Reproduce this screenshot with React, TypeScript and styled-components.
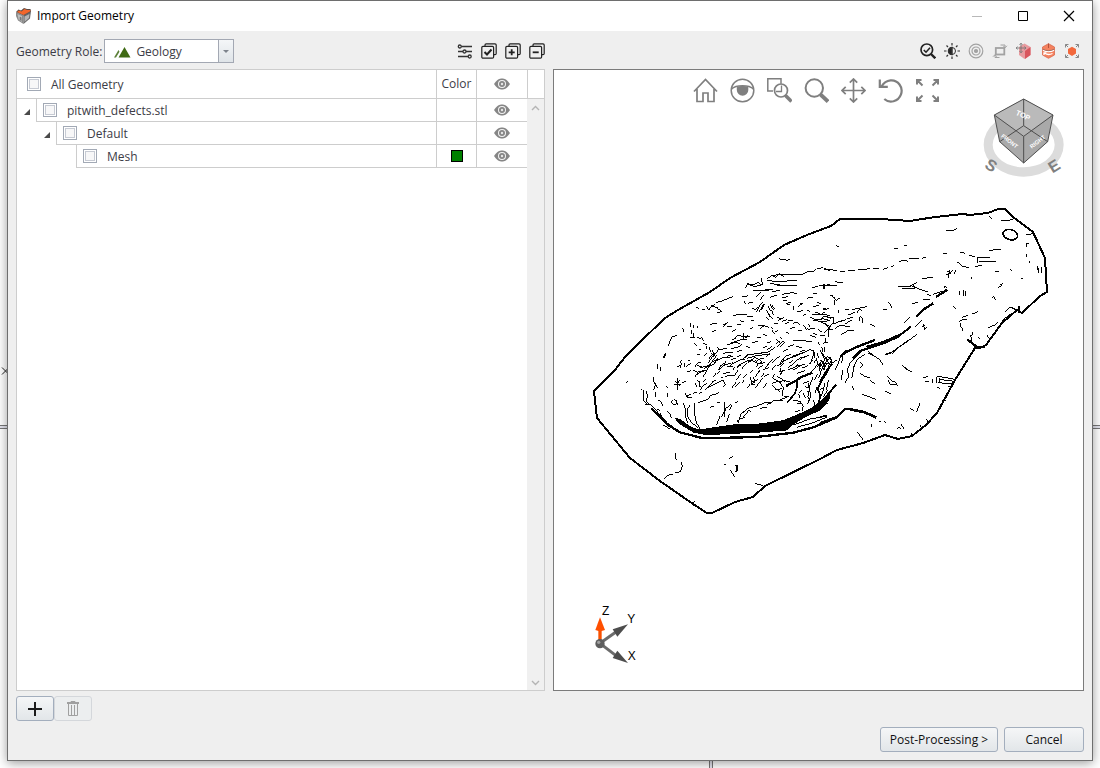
import React from "react";
import styled, { createGlobalStyle, css } from "styled-components";

const GlobalStyle = createGlobalStyle`
  *, *::before, *::after { box-sizing: border-box; }
  body {
    margin: 0;
    background: #fff;
    color: #3c3c46;
    font-family: "Open Sans", "Noto Sans", sans-serif;
    font-size: 12px;
    line-height: 16px;
  }
  button, select, input { font: inherit; color: inherit; margin: 0; }
`;

const Page = styled.div`
  position: relative;
  display: flex;
  min-height: 100vh;
  padding: 0 7px 7px;
  overflow: hidden;
  background:
    linear-gradient(#777 1px, #e4e4ee 1px 3px, #777 3px) 0 425px / 100% 4px no-repeat,
    linear-gradient(90deg, #777 1px, #e4e4ee 1px 3px, #777 3px) 709px 0 / 4px 100% no-repeat,
    #fff;
`;

const BackdropMark = styled.svg`
  position: absolute;
  left: 1px;
  top: 366px;
`;

const Dialog = styled.section`
  position: relative;
  flex: 1;
  min-width: 0;
  display: flex;
  flex-direction: column;
  border: 1px solid #6e6e6e;
  background: #efefef;
  box-shadow: 0 2px 10px rgba(0, 0, 0, 0.4);
`;

const TitleBar = styled.header`
  display: flex;
  align-items: center;
  height: 30px;
  padding-left: 8px;
  background: #fff;
  color: #000;
`;

const Title = styled.h1`
  flex: 1;
  margin: 0 0 0 6px;
  font-size: 12px;
  font-weight: 400;
`;

const CaptionButton = styled.button`
  display: grid;
  place-items: center;
  width: 46px;
  height: 28px;
  padding: 0;
  border: 0;
  background: none;
`;

const Content = styled.main`
  flex: 1;
  display: grid;
  grid-template-columns: minmax(0, 529fr) minmax(0, 531fr);
  grid-template-rows: 38px 1fr;
  column-gap: 8px;
  padding: 0 8px;
`;

const Toolbar = styled.div<{ $inset?: boolean }>`
  display: flex;
  align-items: center;
  gap: 8px;
  padding-top: 2px;
  padding-right: ${(p) => (p.$inset ? 4 : 0)}px;
  justify-content: ${(p) => (p.$inset ? "flex-end" : "flex-start")};
`;

const RoleLabel = styled.label`
  flex: 1;
  display: flex;
  align-items: center;
  gap: 2px;
  white-space: nowrap;
`;

const Caption = styled.span`
  padding-top: 2px;
`;

const Combo = styled.span`
  position: relative;
  width: 130px;
  height: 24px;
`;

const RoleSelect = styled.select`
  appearance: none;
  width: 100%;
  height: 100%;
  padding: 2px 18px 0 31px;
  border: 1px solid #a3a8b3;
  border-radius: 0;
  background: linear-gradient(#f4f6f8, #dfe4e8) right / 15px 100% no-repeat, #fff;
`;

const ComboIcon = styled.svg`
  position: absolute;
  left: 10px;
  top: 7px;
  pointer-events: none;
`;

const ComboArrow = styled.svg`
  position: absolute;
  right: 0;
  top: 0;
  pointer-events: none;
`;

const IconButton = styled.button`
  display: block;
  width: 16px;
  height: 16px;
  padding: 0;
  border: 0;
  background: none;
  svg { display: block; }
`;

const TreePanel = styled.div`
  display: flex;
  border: 1px solid #cdcdcd;
  background: #fff;
`;

const TreeArea = styled.div`
  flex: 1;
  min-width: 0;
`;

const Tree = styled.table`
  width: 100%;
  table-layout: fixed;
  border-collapse: separate;
  border-spacing: 0;
`;

const line = css`1px solid #cdcdcd`;

const Cell = styled.td<{ $head?: boolean }>`
  height: ${(p) => (p.$head ? 29 : 23)}px;
  padding: 0;
  border-bottom: ${line};
  border-left: ${line};
  font-weight: 400;
  text-align: center;
  svg { display: block; margin: 0 auto; }
`;

const NameCell = styled.td<{ $head?: boolean }>`
  height: ${(p) => (p.$head ? 29 : 23)}px;
  padding: 0;
  font-weight: 400;
  text-align: left;
`;

const NameRow = styled.div`
  display: flex;
  height: 100%;
`;

const Twisty = styled.button<{ $depth: number }>`
  flex: none;
  display: grid;
  place-items: center end;
  width: ${(p) => p.$depth * 20 - 1}px;
  padding: 2px 6px 0 0;
  border: 0;
  background: none;
`;

const CheckLabel = styled.label<{ $head?: boolean }>`
  flex: 1;
  display: flex;
  align-items: center;
  gap: 10px;
  height: ${(p) => (p.$head ? 29 : 23)}px;
  padding-left: ${(p) => (p.$head ? 10 : 6)}px;
  border-bottom: ${line};
  border-left: ${(p) => (p.$head ? "0" : "1px solid #cdcdcd")};
`;

const Check = styled.input`
  appearance: none;
  width: 14px;
  height: 14px;
  border: 1px solid #a2a9b5;
  background: #f7f7f8;
  box-shadow: inset 0 0 0 1px #fff, inset 0 0 0 2px #c6cad3;
`;

const Swatch = styled.button`
  display: block;
  width: 12px;
  height: 12px;
  margin: 0 auto;
  padding: 0;
  border: 1px solid #000;
  background: #008000;
`;

const EyeButton = styled.button`
  display: block;
  width: 16px;
  margin: 0 auto;
  padding: 0;
  border: 0;
  background: none;
`;

const Scrollbar = styled.div`
  flex: none;
  display: flex;
  flex-direction: column;
  justify-content: space-between;
  align-items: center;
  width: 17px;
  padding-bottom: 4px;
  background: #f0f0f0;
`;

const ScrollHead = styled.div`
  align-self: stretch;
  height: 29px;
  margin-bottom: 6px;
  border-left: ${line};
  border-bottom: ${line};
  background: #fff;
`;

const ScrollUp = styled.div`
  flex: 1;
  display: flex;
  flex-direction: column;
  align-self: stretch;
  align-items: center;
`;

const Viewport = styled.div`
  position: relative;
  border: 1px solid #7b7b7b;
  background: #fff;
`;

const Scene = styled.svg`
  position: absolute;
  inset: 0;
  width: 100%;
  height: 100%;
`;

const ViewTools = styled.div`
  position: relative;
  display: flex;
  justify-content: center;
  padding: 7px 5px 0 0;
`;

const ViewButton = styled.button`
  display: grid;
  place-items: center;
  width: 37px;
  height: 27px;
  padding: 0;
  border: 0;
  background: none;
`;

const ViewCube = styled.svg`
  position: absolute;
  top: 27px;
  right: 18px;
`;

const Axes = styled.svg`
  position: absolute;
  left: 26px;
  bottom: 10px;
`;

const Actions = styled.div`
  display: flex;
  padding: 5px 8px 0;
`;

const Footer = styled.footer`
  display: flex;
  justify-content: flex-end;
  gap: 6px;
  padding: 6px 8px 8px;
`;

const PushButton = styled.button<{ $width: number }>`
  display: grid;
  place-items: center;
  width: ${(p) => p.$width}px;
  height: 25px;
  padding: 0;
  border: 1px solid #a3aebd;
  border-radius: 3px;
  background: linear-gradient(#f5f6f7, #e2e6e9);
  color: #111;
  white-space: nowrap;
  &:disabled { border-color: #d4d7db; background: #eceeef; color: #9a9a9a; }
`;

const Eye = () => (
  <svg width="16" height="12" viewBox="0 0 16 12">
    <path d="M0 6C3 1.600 5.500.5 8 .5S13 1.600 16 6c-3 4.400-5.500 5.500-8 5.500S3 10.400 0 6z" fill="#868686" />
    <circle cx="8" cy="6" r="4" fill="#f4f4f4" />
    <circle cx="8" cy="6" r="3" fill="#868686" />
    <circle cx="8" cy="6" r="1.200" fill="#e6e6e6" />
  </svg>
);

const AppIcon = () => (
  <svg width="15" height="16" viewBox="0 0 15 16">
    <path d="M0 4L7.500 7.500V16L2 12.500 0 8z" fill="#8b8b8b" />
    <path d="M15 3l-1 7.500L7.500 16V7z" fill="#666" />
    <path d="M1.500 6l4.500 2v6L2.500 11.500z" fill="#bdbdbd" />
    <path d="M3.800 9.500q1-1.500 1.700.5v3l-1.700-1z" fill="#777" />
    <path d="M8.500 8.500L13.500 6l-.5 4-4.500 4z" fill="#b4b4b4" />
    <path d="M0 4L2.500 1.500 5 2.500 8 0l3 1 3.500 0L15 3.500 7.500 7.500z" fill="#5a4a44" />
    <path d="M1 4l2-1.500L5.500 3.500 8.500 1 11 2h3.300v1.300L7.500 7z" fill="#f2662a" />
  </svg>
);

const Sliders = () => (
  <svg width="16" height="16" viewBox="0 0 16 16" fill="none" stroke="#333" strokeWidth="1.300">
    <path d="M4.500 3.500H15M1 8.500h5M9 8.500h6M1 13.500h10" />
    <circle cx="2.800" cy="3.500" r="1.500" />
    <circle cx="7.500" cy="8.500" r="1.500" />
    <circle cx="12.700" cy="13.500" r="1.500" />
  </svg>
);

const Stacked = ({ mark, heavy }: { mark: string; heavy?: boolean }) => (
  <svg width="16" height="16" viewBox="0 0 16 16" fill="none" stroke="#222" strokeWidth="1.200">
    <path d="M4 3V2Q4 .8 5.200.8H14Q15.200.8 15.200 2v8.500q0 1.200-1.200 1.200h-1" />
    <rect x=".8" y="3.400" width="11.800" height="11.800" rx="1.200" />
    <path d={mark} strokeWidth={heavy ? 2 : 1.800} />
  </svg>
);

const RightIcons: { name: string; art: React.ReactNode }[] = [
  {
    name: "Check geometry",
    art: (
      <g fill="none" stroke="#222">
        <circle cx="6.800" cy="6.800" r="5.800" strokeWidth="1.700" />
        <path d="M11 11l4.300 4.300" strokeWidth="2.400" />
        <path d="M3.800 7l2.200 2.200 4-4.400" strokeWidth="1.600" />
      </g>
    ),
  },
  {
    name: "Lighting",
    art: (
      <g stroke="#333" fill="none">
        <circle cx="8" cy="8" r="3.500" />
        <path d="M8 4.500a3.500 3.500 0 000 7z" fill="#222" strokeWidth="1.500" />
        <path d="M8 0v2.500M8 13.500V16M0 8h2.500M13.500 8H16M2.500 2.500l1.500 1.500M12 12l1.500 1.500M13.500 2.500L12 4M4 12l-1.500 1.500" strokeWidth="1.200" />
      </g>
    ),
  },
  {
    name: "Target",
    art: (
      <g stroke="#a2a2a2" fill="none" strokeWidth="1.200">
        <circle cx="8" cy="8" r="6.800" />
        <circle cx="8" cy="8" r="4" />
        <circle cx="8" cy="8" r="1.500" fill="#a2a2a2" />
      </g>
    ),
  },
  {
    name: "Rotate plane",
    art: (
      <g stroke="#a2a2a2" fill="none">
        <rect x="3.800" y="5" width="8.500" height="6.500" strokeWidth="1.800" />
        <path d="M8.500 2h4.500v2.500M11.300 2.800l1.700 2 2-2M7.500 14.500H3V12M1 13.700l2-2 1.700 2" strokeWidth="1" />
      </g>
    ),
  },
  {
    name: "Move body",
    art: (
      <g>
        <path d="M3 4l5.500-3.500L14.500 4v8l-6 4L3 12z" fill="#e79a9e" />
        <path d="M9 8l5.500-4v8L9 16z" fill="#d9555d" />
        <path d="M5 0v10M0 5h10M3.500 1.800L5 .3l1.500 1.500M3.500 8.200L5 9.700l1.500-1.500M1.600 3.500L.2 5 1.600 6.500M8.500 3.500L9.900 5 8.500 6.500" fill="none" stroke="#777" strokeWidth=".9" />
      </g>
    ),
  },
  {
    name: "Rotate body",
    art: (
      <g>
        <path d="M2.500 4l6-3.300L14.500 4v8l-6 3.300-6-3.300z" fill="#f5825f" stroke="#d9694c" strokeWidth=".8" />
        <path d="M8.500.5v4.500" stroke="#b5523c" />
        <path d="M3 7.200c3 2 8 2 11 0M12.500 10.500c-3 1.500-6 1-8-.5M4 12V9.800h2.400" fill="none" stroke="#fff" strokeWidth="1.300" />
        <path d="M3 6.200c3 2 8 2 11 0" fill="none" stroke="#8c6a60" strokeWidth=".8" />
      </g>
    ),
  },
  {
    name: "Fit body",
    art: (
      <g>
        <path d="M4 6l4-2.300L12 6v4.600l-4 2.300-4-2.300z" fill="#f2683c" />
        <path d="M1.500 4.500v-3h3M1.500 1.500L4 4M11.500 1.500h3v3M14.500 1.500L12 4M1.500 11.500v3h3M1.500 14.500L4 12M14.500 11.500v3h-3M14.500 14.500L12 12" fill="none" stroke="#888" />
      </g>
    ),
  },
];

const ViewIcons: { name: string; art: React.ReactNode }[] = [
  { name: "Home view", art: <path d="M1 13.500L12.500 1.500 24 13.500M4 11v12.500h6V15h5v8.500h6V11" strokeWidth="1.700" /> },
  {
    name: "Visibility",
    art: (
      <>
        <circle cx="12.500" cy="12.500" r="11.300" strokeWidth="1.500" />
        <path d="M1.500 11C6 6.800 19 6.800 23.500 11" strokeWidth="1.500" />
        <path d="M6.800 9.300c3-1.600 8.500-1.600 11.500 0v2.700a5.700 5.700 0 01-11.500 0z" fill="#7f7f7f" stroke="none" />
      </>
    ),
  },
  {
    name: "Zoom window",
    art: (
      <>
        <path d="M6 13H.8V.8H14v5" strokeWidth="1.500" />
        <circle cx="14" cy="12.500" r="6.500" strokeWidth="1.700" />
        <path d="M9 13.500h5.500V7.500" strokeWidth="1.300" />
        <path d="M18.500 17.500l6 6" strokeWidth="3.600" />
      </>
    ),
  },
  {
    name: "Zoom",
    art: (
      <>
        <circle cx="10.300" cy="10" r="8.700" strokeWidth="2" />
        <path d="M16.500 16.500l7.500 7" strokeWidth="3.800" />
      </>
    ),
  },
  { name: "Pan", art: <path d="M12.500 1v23M1 12.500h23M8.800 4.700l3.700-3.700 3.700 3.700M8.800 20.300l3.700 3.700 3.700-3.700M4.700 8.800L1 12.500l3.700 3.700M20.300 8.800l3.700 3.700-3.700 3.700" strokeWidth="1.700" /> },
  { name: "Rotate", art: <path d="M3.500 8.500C8 1 17 .5 21.500 6.500S23 21 15.500 23.200C12 24 8.500 23 6.300 21M1.800 1.500v7.300h8" strokeWidth="2.200" /> },
  { name: "Full view", art: <path d="M2 6.500V2h4.500M2 2l5.500 5.500M18.500 2H23v4.500M23 2l-5.500 5.500M2 18.500V23h4.500M2 23l5.500-5.500M23 18.500V23h-4.500M23 23l-5.500-5.500" strokeWidth="2" /> },
];

/* Feature edges of the pit surface, in four tiles drawn at three units per pixel. */
const meshNW =
  "M597 175l8 4l8-2l6 4l10-2M495 265l8-12l18 6l22-2M500 250l20 5l15-8l12 10M545 235l2 20M520 270l28 3l20-3M560 238l15-12l40-3M575 225l12 8l10-12l14 8M600 222l40 2l30-2l15-8l15 2l10-10l20-3M732 205l18 8M560 240l30 6l60-6M570 250l30 5M590 258l60-2M695 262l20-2M718 258l32-4M735 252v15M575 275l25-4M605 283l30-5l15 2M680 295l20-4M700 282l10-3M530 290l12-14M540 300l12-16M555 270l25-3M570 292l20-6M605 293l20-3M610 300l12 2M618 310l15-2M620 312l10 3" +
  "M408 308l20-6l30-12M347 322l10 3M365 327l10 2M380 318l6 12l8-10l20 2M392 318l14-4M410 325l12 6M412 338l14-4M485 290l12 0l6-4M490 302l8 10M505 310l10-3l4 3M515 325l12 3l10-8M530 335l10-20l8-8M538 335l12-22M545 330l8-18M565 318l6 14M570 312l10 18M560 330l10 20M565 340l12 16M460 347l20-5l20 2M500 349l20 0M590 350l12 6M595 362l16-10M605 365l15-6M615 372l12-6M625 360l14 3M640 370l12-4l8 8M655 320l12-10M652 335l16-3M640 318v12M660 310l10 2" +
  "M690 352l20 8l20-4l20 6M695 345l25-2l30 3M705 338l15 2M700 362l30 2l20-2M735 370l12 15M745 385v25M728 330l20-5M333 370v10M340 375v8M352 378l2 5M390 375l10-5l10 0M395 395l12-3M430 375l15-8M428 382l10-10M440 378l15 3M510 385l10-2M535 375l20 3l12 4M540 385l14-8M575 390l10 12M308 385l5 12M280 410l12-6M277 408l-8 18l-5 12M335 390v12M340 400v15M330 412l14 2M350 410l12 6M365 412l5 10M370 430l10 4M378 438l4 10M388 440l3 16M398 450l4 20M392 460l12 6" +
  "M470 405l20 5l15-3M490 398v22M480 420l20-2M495 412l15-2M440 435l25-8l15 3M450 430l30-10M400 470l15-20l15-2M410 440l12 10M420 450l20-6M640 422l30 0l25 3M690 405l18 8M670 375l10 15M680 385l10 5M700 400l12 4M685 372l4 8M590 418l8 10M600 410l8 8M588 432l12-10M592 440l20-18M600 440l14-14M712 425l8 10M725 440l4 16M738 415v12M730 430l14-4" +
  "M485 480l20-15l30-5l30-4l20-14M500 475l30-8l40-5M505 487l12-6l10 6l14-12l10 0M575 490l14-14l12-8M590 500l12-10M600 495l20-18l30-10l40-18l12 4l-4 20l-8 20M625 510l30-14l20-2M350 465l10-3M325 482l5-2M355 487l8 0M255 462l-6 12M305 488l-5 16M315 490l-3 10M325 495l8-6M360 502l20-2l20-16l20-6M372 505l30-12l8-12l20-8l30-3M415 510l20-16l18-4M440 500l20 0M460 490l20-10l15-2M470 505l14-12M705 455v20M712 460l4 14M700 490l10-12M720 450l15 30M725 480l10 22M738 470l8 20M715 495l6 12" +
  "M465 412l10-6M455 418l14-2M498 440l12 2M516 428l18-4M530 412l14 2M550 402l12 6M572 382l8 6M584 398l10-8M428 462l14-6l16 2M440 474l18-6M470 456l16-6M452 446l20-4l14-8M385 478l10-12M372 468l8-8M342 430l8 8M356 446l8 4M560 430l14-6M548 442l12-2M562 448l14-8M610 455l14-8M625 440l16-6M648 440l18 2M660 456l14-6M612 478l-8 14M640 480l-14 10M660 478l14-8M676 470l12-4M540 492l16-6M534 506l14-10M556 505l10-14M700 320l16-4M712 308l12 2M680 330l10 4M668 348l10-6M690 385l16 2M715 388l10 8M720 405l14 2M655 392l10-2M630 385l14-2M618 395l8 6M470 375l14-2M480 362l12 3M455 395l12-6M512 362l10-2M566 360l-8-10M582 372l12-3M580 345l-6-16M584 328l-8-12M345 500l8-10";

const meshNE =
  "M378 90l20 2l14-8M506 48l10 10M542 60l20 2l18-4M48 135l8 6M222 146h12M252 136h8M12 208l20 0l20 5M85 213l20-2M113 210l24-2l14-4M60 216l14-1M160 207l18-2M190 208l15-6M213 200l8-3M238 185l16-5l10 4M268 176h28M305 176l14-5M368 160h14M420 156l14 4M446 165l20 6M470 172h40M472 172v16M478 184h50M508 151l34-3M618 104l22-3M412 186l14 12l22 6M465 200l20-4M378 225l22-14M388 210l-2 25M402 222l6-12M380 212l14 10M305 237l35-6M455 230v6M526 214h10M570 208l6 4M604 236h4M535 262l12-6M540 256l10-8M620 130v10M618 130h8M620 162v10M628 184l1 6M652 198v12M656 204v14M664 202v18" +
  "M235 260l40-2l20 8l30 10M245 265h40l-4-10M270 258l20-10M418 272v12M430 270v18M436 274v14M320 283l14 4M340 283l30-10M372 265l4-8l6 8M515 295l6-6l5 10M275 310l20-2M310 297l20 2M205 305l6 8l4 12M190 328h12M400 318l8 8M425 352l20-6M418 365l8-6h14M455 343l18-8M420 370l2 10M425 380l4 14M460 395l-6 14M450 405l6 10l-2 10M475 410l6 8M500 405l6 8M505 383l20-8l10-10M545 362l24-18M556 335l14-14l12 4M575 322l16 14M583 326l14 8M270 350l-20 20M285 380l20-20M307 380l8-4M310 372l4 18l6-10M292 402l-40 30l-25 15l-10 15M265 420l-40 30M197 462l30-10l14-14M150 372l14 8M145 455l14 10l20 14l10 16M245 495l18 14" +
  "M0 345l14-8M0 365l30 14v8M10 350l30 2l2 14l-12 14M0 360l14-12l20 8M8 326h10M30 285l16 10M35 285l14 16l12-8M45 300v14M55 330v8M0 258h50M12 252v14M45 245l24 4M75 328h12M85 345l20-8M95 330l20-6l12 8M110 340l10-16l20-4M62 365l16-6M75 372l20-12M80 355l20-2M62 405l20-12l20-2M120 348l8 8v12M118 362l2-10M40 372l30-12M45 385l14-8l30 2M10 400l10-10l20 0M15 440v16M22 470l14 10l-2 18M25 385v25M0 490l14 20";

const meshSW =
  "M232 42v14M242 50v14M252 25l6-16M222 80l-2 14l6 10l-5 16M226 100l6 14M228 125l-2 16M235 150l10 8M262 130v10M258 108l6 4M140 98l5-5M182 118h4M192 120l-2 30l10 12M200 122l2 20l-4 14M200 155l18 15l20 22l25 28l12 8M195 165l12-2M230 175l10 8M245 160l4 8M262 185l8 6l4 12M240 190l10 16M250 225l20 12M282 105l20-3M292 85v35M286 95l14 12M300 90l-10 14M305 100l12-6M275 155l6-6l8 2l2 10l-8 4l-6-4zM290 155l4 10M310 160l8 20l-2 20l8 20M315 130l10 14l10-2M318 140l16-8M345 158l-2 30l6 30l12 20M355 158l30-10l6-12l20-5l6-6M330 165l-8 14l2 22l10 16l20 16" +
  "M345 100l6 10M350 90l10 6l-2 12l8 6M360 120l10-14l10-6M375 120l15-16l10-8M385 112l25-12l20-10l6 14l-8 8M430 85l-8-4M395 95l14-4M358 130l8-4M340 130l12-4M345 80l10-14l20-6M340 60l14 8M350 45l20 8M385 40l10-18l12-14M400 45l14-22M350 75l14-10l16-4M370 80l10-18l10-18l20-28M435 80l15-4l14 2M455 115l14-20M465 110l16-16M430 70l20-3M475 60l-10 14M482 72l-12 18M490 85l10-14M500 40l-14 16M540 60l-14 20M510 80l8 26M520 80l4 16l-10 8M500 115l12-14l14 2M515 95l20-6M525 115l14-18M540 95l10-12M552 80l14-8M548 60l20-8" +
  "M470 50l24-14l16-6M505 35l20-12l14 6l6 8l-12 4l-6-10M560 45l20-20M600 40l14-20l20-8M620 30l20-12l30-10M640 40l20-16l20-4M600 55l6 16M596 66l18-4M608 60l-8 14M575 100l20-6l20-2l14 4M580 85l20 12l10 16l-4 24M575 105l24 20M590 80l16 6l10 10M585 120l20-4M640 60l20-12M650 70l24-8M670 100l16-6M685 100l4 20l-6 20l8 14M675 110l12 4M680 125l10-3M700 60l14-20l-6-16M712 50l10-14M720 40v24M730 60l10-20l8 0M640 150l20 4l10 14l-4 14M650 160l14 2M660 180l-14 6M700 150l6 20M700 80l-12 30l4 30l-10 22M735 100l-8 30l-12 24M745 90l-6 30" +
  "M390 172l12-4M410 160l10-4M425 200l10-20l-2-24M432 200l4-24l16-12M410 225l10-26M440 215l8-22M465 160l10-8M475 215l8-24l16-12M480 205l16-2M470 210l6 8M490 190l10-14l30-8l30-12l14 4M490 200l18-20l6 6M560 165l20-12l30-2M540 175l20-4M288 308l-2 14l4 8M303 335l4 14l-6 16l-16 4M250 388l12-12l16-4M446 325l14-5M433 345l5-4M450 360l14 20M525 400l25 7M335 462l10-8M640 225l50-18l50-8M650 232l50-14l40-16" +
  "M290 50l14-4M300 38l4-8M318 50l8-8M322 66l10-4M415 60l8-14l14-8M428 50l10-16M446 52l14-16M452 30l16-6M440 20l14-6M458 60l8-10M470 20l14-4M560 100l-10 14M552 70l-8 12M575 60l12-14M585 72l-8 12M612 40l-10 10M625 52l14-10M655 40l-10 10M665 55l18-8M688 40l12-10M690 70l10-12M560 20l10-12M540 12l14-6M495 20l12-8M520 60l-10 10M534 42l-6 10M485 100l8-10M530 72l10-8M370 95l8-8M400 80l10-12M412 72l8-10M704 90l8-18M716 84l6-14M722 96l10-20M710 110l-4 20M730 140l14-20M718 150l-6 14M655 130l10-10M660 145l-4-14M670 130l6 14M455 165l-6 14M600 150l20-8M612 140l14-2";

const meshSE =
  "M30 20l6 20l14-10M25 50l8-18M45 60l14-30l2-14M65 40l4-28M65 90l2-30M75 98l10-16l-2-26l8-18l20-20M95 85l8-40M120 35l8 10l-8 10M100 50l14-24l20-12M120 70l16 10l14 4M150 92l14 8M145 10l16 8M245 45l14 12l16 8M196 15l18-6l8-8M200 78l14 14l12 4l8 12M205 90l4 12l22 2M196 124l16 8M125 132l16 6l26 10M98 108l2 12M290 185l10-26M270 176l12 6M178 214h4M190 212l8 8M154 222l2 8M232 235l6-4l6 6M242 222l10 14M310 82l14-2M314 94h12M338 88v10M350 80v20M350 78l56 10M358 88l44 6M355 98l44 4M358 84v16M350 110l10 6M365 150l12 2M320 206l4 10M300 226l4 8M383 108l10 2M112 246l18 24M275 250l2 8M0 50l20-30M0 70l14-28l16-20M0 120l14-10M10 170l14-12M0 200l20-4M8 10l14 24M0 30l20 14";

const outline =
  "M615 370L625 357L638 344L665 318L678 310L710 292L730 278L760 262L784 245L807 235L831 226L840 219L880 219L910 221L935 217L963 214L970 215L988 213L998 209L1005 209L1013 217L1033 232L1045 258L1047 292L1040 296L1022 313L1017 310L1002 323L986 345L980 348L975 348L955 380L937 413L926 425L912 436L898 439L885 435L863 443L837 450L820 459L765 486L753 497L735 502L712 513L707 513L693 504L660 481L630 458L597 418L594 391Z";

const Mesh = () => (
  <Scene viewBox="554 70 529 620" fill="none" stroke="#000" shapeRendering="crispEdges" role="img" aria-label="Pit surface">
    <path d={outline} strokeWidth="2" />
    <g transform="translate(580 200) scale(.33333)" strokeWidth="3">
      <path d={meshNW} />
    </g>
    <g transform="translate(820 200) scale(.33333)" strokeWidth="3">
      <path d={meshNE} />
      <ellipse cx="571" cy="104" rx="22" ry="15" transform="rotate(15 571 104)" strokeWidth="5" />
      <path d="M348 291l34-22M290 350l18-20l32-20M60 470l20-15l40-18l45-17M442 418l30 24l22-2M596 318l2 20" strokeWidth="7" />
      <path d="M100 475l20-22l60-20l60-28l34-26" strokeWidth="6" />
      <path d="M140 442l50-14l50-22" strokeWidth="10" />
    </g>
    <g transform="translate(580 350) scale(.33333)" strokeWidth="3">
      <path d={meshSW} />
      <path d="M370 238L465 224L540 222L610 212L640 200L690 178L740 140L750 125V145L720 180L680 198L640 222L620 240L540 246L460 250L380 254L340 246L300 222L285 205L300 208L330 230L350 238Z" fill="#000" />
      <path d="M215 175L260 222L300 247L370 265L530 261L640 248L700 232L752 210" strokeWidth="7" />
      <path d="M618 108l30-16l14-10l35-14" strokeWidth="7" />
      <path d="M650 90l2 16l-6 22l-14 18l-12 12M745 60l-22 36l-10 20l8 20l-5 24M466 345l6 4v12l-6 4" strokeWidth="5" />
    </g>
    <g transform="translate(820 350) scale(.33333)" strokeWidth="3">
      <path d={meshSE} />
      <path d="M0 158l20-20l28-34M0 96l20-34l16-20M60 20l20-20M98 25l30-25" strokeWidth="6" />
      <path d="M0 220l50-18l25-25h12l48 10l34 16" strokeWidth="8" />
    </g>
  </Scene>
);

const Cube = () => (
  <ViewCube width="84" height="83" viewBox="244 79 252 249" fontFamily="Liberation Sans, sans-serif" fontWeight="700" textAnchor="middle">
    <path d="M252 222a120 96 0 10240 0a120 96 0 10-240 0zM279 222a93 68 0 11186 0a93 68 0 11-186 0z" fill="#dcdcdc" fillRule="evenodd" />
    <path d="M372 85L460 133L444 213L372 277L300 213L284 133Z" fill="#a9a9a9" />
    <path d="M372 85L460 133L372 197L284 133Z" fill="#bababa" />
    <path d="M372 165L398 181L372 197L346 181Z" fill="#b2b2b2" />
    <path d="M372 85L460 133L444 213L372 277L300 213L284 133ZM284 133L372 197L460 133M372 197V277M372 85V165M300 213L372 165L444 213" fill="none" stroke="#4e4e4e" strokeWidth="3" />
    <g fill="#fff" fontSize="22">
      <text transform="translate(367 141) rotate(25)">TOP</text>
      <text transform="translate(326 216) rotate(38)" fontSize="17">FRONT</text>
      <text transform="translate(417 218) rotate(-38)" fontSize="17">RIGHT</text>
    </g>
    <g fill="#808080" fontSize="48">
      <text transform="translate(266 298) rotate(32)">S</text>
      <text transform="translate(472 300) rotate(-32)">E</text>
    </g>
  </ViewCube>
);

const Triad = () => (
  <Axes width="80" height="90" viewBox="0 0 240 270" fontFamily="Liberation Sans, sans-serif" fontSize="36" textAnchor="middle">
    <path d="M60 160L112 123" stroke="#6c6c6c" strokeWidth="9" />
    <path d="M144 103L98 118L112 140Z" fill="#4d4d4d" />
    <path d="M60 160L108 197" stroke="#6c6c6c" strokeWidth="9" />
    <path d="M144 219L98 204L112 182Z" fill="#4d4d4d" />
    <path d="M60 155V118" stroke="#f85000" strokeWidth="10" />
    <path d="M60 82L46 120Q60 127 75 120Z" fill="#ff4f00" />
    <circle cx="60" cy="161" r="14" fill="#5d5d5d" />
    <circle cx="56" cy="157" r="5" fill="#a0a0a0" />
    <text x="77" y="75">Z</text>
    <text x="154" y="99">Y</text>
    <text x="155" y="209">X</text>
  </Axes>
);

const rows = [
  { name: "pitwith_defects.stl", depth: 1, open: true, color: false },
  { name: "Default", depth: 2, open: true, color: false },
  { name: "Mesh", depth: 3, open: false, color: true },
];

export default function App() {
  return (
    <Page>
      <GlobalStyle />
      <BackdropMark width="9" height="10" viewBox="0 0 9 10">
        <path d="M1 1.500l7 7M8 1.500l-7 7" stroke="#222" />
      </BackdropMark>
      <Dialog aria-label="Import Geometry">
        <TitleBar>
          <AppIcon />
          <Title>Import Geometry</Title>
          <CaptionButton aria-label="Minimize" disabled>
            <svg width="12" height="11" viewBox="0 0 12 11"><path d="M1 5.500h10" stroke="#b8b8b8" /></svg>
          </CaptionButton>
          <CaptionButton aria-label="Maximize">
            <svg width="12" height="12" viewBox="0 0 12 12"><path d="M1.500 1.500h9v9h-9z" fill="none" stroke="#000" /></svg>
          </CaptionButton>
          <CaptionButton aria-label="Close">
            <svg width="12" height="12" viewBox="0 0 12 12"><path d="M1 1l10 10M11 1L1 11" stroke="#000" strokeWidth="1.200" /></svg>
          </CaptionButton>
        </TitleBar>
        <Content>
          <Toolbar>
            <RoleLabel>
              <Caption>Geometry Role:</Caption>
              <Combo>
                <RoleSelect defaultValue="Geology">
                  <option>Geology</option>
                </RoleSelect>
                <ComboIcon width="17" height="12" viewBox="0 0 17 12">
                  <path d="M4.500 11.500L10.500 1l6 10.500z" fill="#3f6a14" />
                  <path d="M0 11.500L4.500 4l1 1.800L2 11.500zM3 11.500L7 4.500" fill="#5c8038" />
                </ComboIcon>
                <ComboArrow width="16" height="24" viewBox="0 0 16 24">
                  <path d="M.5 0v24" stroke="#a3a8b3" />
                  <path d="M5 11h6l-3 3z" fill="#7d838c" />
                </ComboArrow>
              </Combo>
            </RoleLabel>
            <IconButton aria-label="Options"><Sliders /></IconButton>
            <IconButton aria-label="Check all"><Stacked mark="M3.500 9l2.500 2.500 4.500-5" heavy /></IconButton>
            <IconButton aria-label="Expand all"><Stacked mark="M6.700 6.300v6M3.700 9.300h6" /></IconButton>
            <IconButton aria-label="Collapse all"><Stacked mark="M3.700 9.300h6" /></IconButton>
          </Toolbar>
          <Toolbar $inset>
            {RightIcons.map((icon) => (
              <IconButton key={icon.name} aria-label={icon.name}>
                <svg width="16" height="16" viewBox="0 0 16 16">{icon.art}</svg>
              </IconButton>
            ))}
          </Toolbar>
          <TreePanel>
            <TreeArea>
              <Tree>
                <colgroup>
                  <col />
                  <col style={{ width: 40 }} />
                  <col style={{ width: 51 }} />
                </colgroup>
                <thead>
                  <tr>
                    <NameCell as="th" $head>
                      <CheckLabel $head>
                        <Check type="checkbox" />
                        <Caption>All Geometry</Caption>
                      </CheckLabel>
                    </NameCell>
                    <Cell as="th" $head><Caption>Color</Caption></Cell>
                    <Cell as="th" $head>
                      <EyeButton aria-label="Toggle all"><Eye /></EyeButton>
                    </Cell>
                  </tr>
                </thead>
                <tbody>
                  {rows.map((row) => (
                    <tr key={row.name}>
                      <NameCell>
                        <NameRow>
                          <Twisty $depth={row.depth} disabled={!row.open} aria-label={`Toggle ${row.name}`}>
                            {row.open && (
                              <svg width="6" height="6" viewBox="0 0 6 6"><path d="M6 0v6H0z" fill="#4a4a4a" /></svg>
                            )}
                          </Twisty>
                          <CheckLabel>
                            <Check type="checkbox" />
                            <Caption>{row.name}</Caption>
                          </CheckLabel>
                        </NameRow>
                      </NameCell>
                      <Cell>{row.color && <Swatch aria-label="Mesh color" />}</Cell>
                      <Cell>
                        <EyeButton aria-label={`Show ${row.name}`}><Eye /></EyeButton>
                      </Cell>
                    </tr>
                  ))}
                </tbody>
              </Tree>
            </TreeArea>
            <Scrollbar>
              <ScrollUp>
                <ScrollHead />
                <svg width="9" height="6" viewBox="0 0 9 6"><path d="M1 5l3.500-3.500L8 5" fill="none" stroke="#b4b4b4" strokeWidth="1.400" /></svg>
              </ScrollUp>
              <svg width="9" height="6" viewBox="0 0 9 6"><path d="M1 1l3.500 3.500L8 1" fill="none" stroke="#b4b4b4" strokeWidth="1.400" /></svg>
            </Scrollbar>
          </TreePanel>
          <Viewport>
            <Mesh />
            <ViewTools>
              {ViewIcons.map((icon) => (
                <ViewButton key={icon.name} aria-label={icon.name}>
                  <svg width="25" height="25" viewBox="0 0 25 25" fill="none" stroke="#7f7f7f">{icon.art}</svg>
                </ViewButton>
              ))}
            </ViewTools>
            <Cube />
            <Triad />
          </Viewport>
        </Content>
        <Actions>
          <PushButton $width={38} aria-label="Add geometry">
            <svg width="14" height="14" viewBox="0 0 14 14"><path d="M7 0v14M0 7h14" stroke="#1c1c1c" strokeWidth="2" /></svg>
          </PushButton>
          <PushButton $width={38} aria-label="Delete geometry" disabled>
            <svg width="12" height="15" viewBox="0 0 12 15" fill="none" stroke="#a0a0a0">
              <path d="M0 2h12" strokeWidth="2" />
              <path d="M4 1V.5h4V1M1.500 3v11.500h9V3M4.500 4v10M7.500 4v10" />
            </svg>
          </PushButton>
        </Actions>
        <Footer>
          <PushButton $width={118}>Post-Processing &gt;</PushButton>
          <PushButton $width={80}>Cancel</PushButton>
        </Footer>
      </Dialog>
    </Page>
  );
}
